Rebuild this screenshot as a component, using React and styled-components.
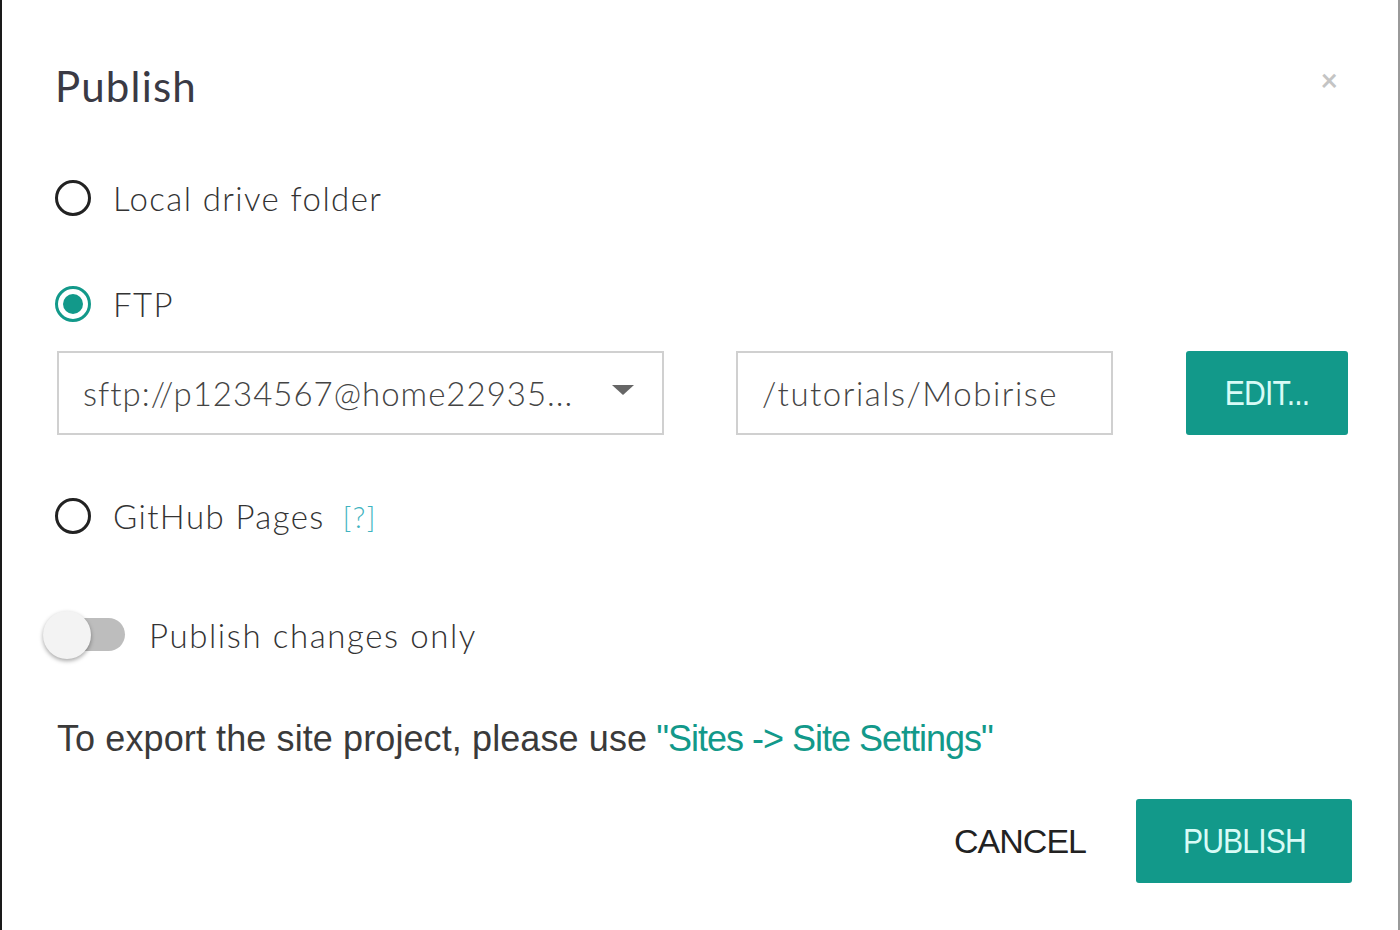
import React from 'react';
import styled, { createGlobalStyle } from 'styled-components';

const teal = '#12998a';

const Global = createGlobalStyle`
  html, body {
    margin: 0;
    padding: 0;
    background: #ffffff;
  }
  body {
    font-family: Lato, "Open Sans", sans-serif;
    color: #333333;
  }
`;

const Dialog = styled.div`
  position: relative;
  box-sizing: border-box;
  width: 1400px;
  height: 930px;
  background: #ffffff;
  border-left: 2px solid #1a1a1a;
  border-right: 2px solid #9a9a9a;
  padding: 60px 50px 0 53px;
  display: flex;
  flex-direction: column;
`;

const Header = styled.div`
  display: flex;
  justify-content: space-between;
  align-items: center;
  height: 52px;
`;

const Title = styled.h1`
  margin: 0;
  font-weight: 400;
  font-size: 42px;
  letter-spacing: 1.2px;
  color: #3a3a44;
`;

const Close = styled.span`
  font-size: 30px;
  color: #c4c4c4;
  margin-right: 10px;
  margin-top: -14px;
  font-weight: 700;
`;

const Option = styled.label`
  display: flex;
  align-items: center;
  gap: 22px;
  margin-top: ${(p) => p.$top}px;
  font-size: 33px;
  font-weight: 300;
  letter-spacing: 1.4px;
  color: #333;
`;

const Radio = styled.span`
  box-sizing: border-box;
  width: 36px;
  height: 36px;
  border-radius: 50%;
  border: 3px solid ${(p) => (p.$checked ? teal : '#222')};
  display: flex;
  align-items: center;
  justify-content: center;
  &::after {
    content: '';
    display: ${(p) => (p.$checked ? 'block' : 'none')};
    width: 20px;
    height: 20px;
    border-radius: 50%;
    background: ${teal};
  }
`;

const Help = styled.span`
  color: #3fb3c0;
  font-size: 29px;
  margin-left: -4px;
`;

const FtpRow = styled.div`
  display: flex;
  align-items: center;
  margin-top: 27px;
  margin-left: 2px;
`;

const Field = styled.div`
  box-sizing: border-box;
  width: ${(p) => p.$width}px;
  margin-left: ${(p) => p.$left || 0}px;
  height: 84px;
  border: 2px solid #d0d0d0;
  display: flex;
  align-items: center;
  justify-content: space-between;
  padding: 0 28px 0 24px;
  font-size: 33px;
  font-weight: 300;
  letter-spacing: ${(p) => p.$spacing || 1}px;
  color: #444;
`;

const Caret = styled.span`
  width: 0;
  height: 0;
  border-left: 11px solid transparent;
  border-right: 11px solid transparent;
  border-top: 10px solid #666;
  margin-top: -6px;
`;

const Button = styled.button`
  box-sizing: border-box;
  height: 84px;
  width: ${(p) => p.$width}px;
  margin-left: ${(p) => p.$left || 0}px;
  border: none;
  border-radius: 3px;
  background: ${teal};
  color: #d8fbf6;
  font-family: "Liberation Sans", Arial, sans-serif;
  font-size: 35px;
  letter-spacing: -1px;
  padding: 0;
  display: flex;
  align-items: center;
  justify-content: center;
`;

const Squeeze = styled.span`
  display: inline-block;
  transform: scaleX(0.86);
`;

const ToggleRow = styled.div`
  display: flex;
  align-items: center;
  margin-top: 74px;
  margin-left: -12px;
  gap: 24px;
  font-size: 33px;
  font-weight: 300;
  letter-spacing: 1.6px;
`;

const Track = styled.span`
  position: relative;
  width: 82px;
  height: 50px;
  display: flex;
  align-items: center;
  &::before {
    content: '';
    position: absolute;
    left: 8px;
    right: 0;
    top: 8px;
    height: 33px;
    border-radius: 17px;
    background: #bdbdbd;
  }
`;

const Knob = styled.span`
  position: relative;
  width: 48px;
  height: 48px;
  border-radius: 50%;
  background: #f3f3f3;
  box-shadow: 0 2px 4px rgba(0, 0, 0, 0.35);
`;

const Note = styled.p`
  margin: 58px 0 0 2px;
  font-family: "Liberation Sans", Arial, sans-serif;
  font-size: 36px;
  color: #3a3a3a;
  letter-spacing: 0.1px;
`;

const Link = styled.span`
  color: ${teal};
  letter-spacing: -1px;
`;

const Footer = styled.div`
  display: flex;
  justify-content: flex-end;
  align-items: center;
  margin-top: 39px;
  margin-right: -4px;
`;

const Cancel = styled.span`
  font-family: "Liberation Sans", Arial, sans-serif;
  font-size: 34px;
  color: #222;
  letter-spacing: -1px;
`;

export default function App() {
  return (
    <>
      <Global />
      <Dialog>
        <Header>
          <Title>Publish</Title>
          <Close>×</Close>
        </Header>
        <Option $top={66}>
          <Radio />
          Local drive folder
        </Option>
        <Option $top={66}>
          <Radio $checked />
          FTP
        </Option>
        <FtpRow>
          <Field $width={608}>
            sftp://p1234567@home22935...
            <Caret />
          </Field>
          <Field $width={378} $left={72} $spacing={1.5}>/tutorials/Mobirise</Field>
          <Button $width={162} $left={73}><Squeeze>EDIT...</Squeeze></Button>
        </FtpRow>
        <Option $top={61}>
          <Radio />
          GitHub Pages <Help>[?]</Help>
        </Option>
        <ToggleRow>
          <Track>
            <Knob />
          </Track>
          Publish changes only
        </ToggleRow>
        <Note>
          To export the site project, please use<Link> "Sites -&gt; Site Settings"</Link>
        </Note>
        <Footer>
          <Cancel>CANCEL</Cancel>
          <Button $width={216} $left={50}><Squeeze>PUBLISH</Squeeze></Button>
        </Footer>
      </Dialog>
    </>
  );
}
